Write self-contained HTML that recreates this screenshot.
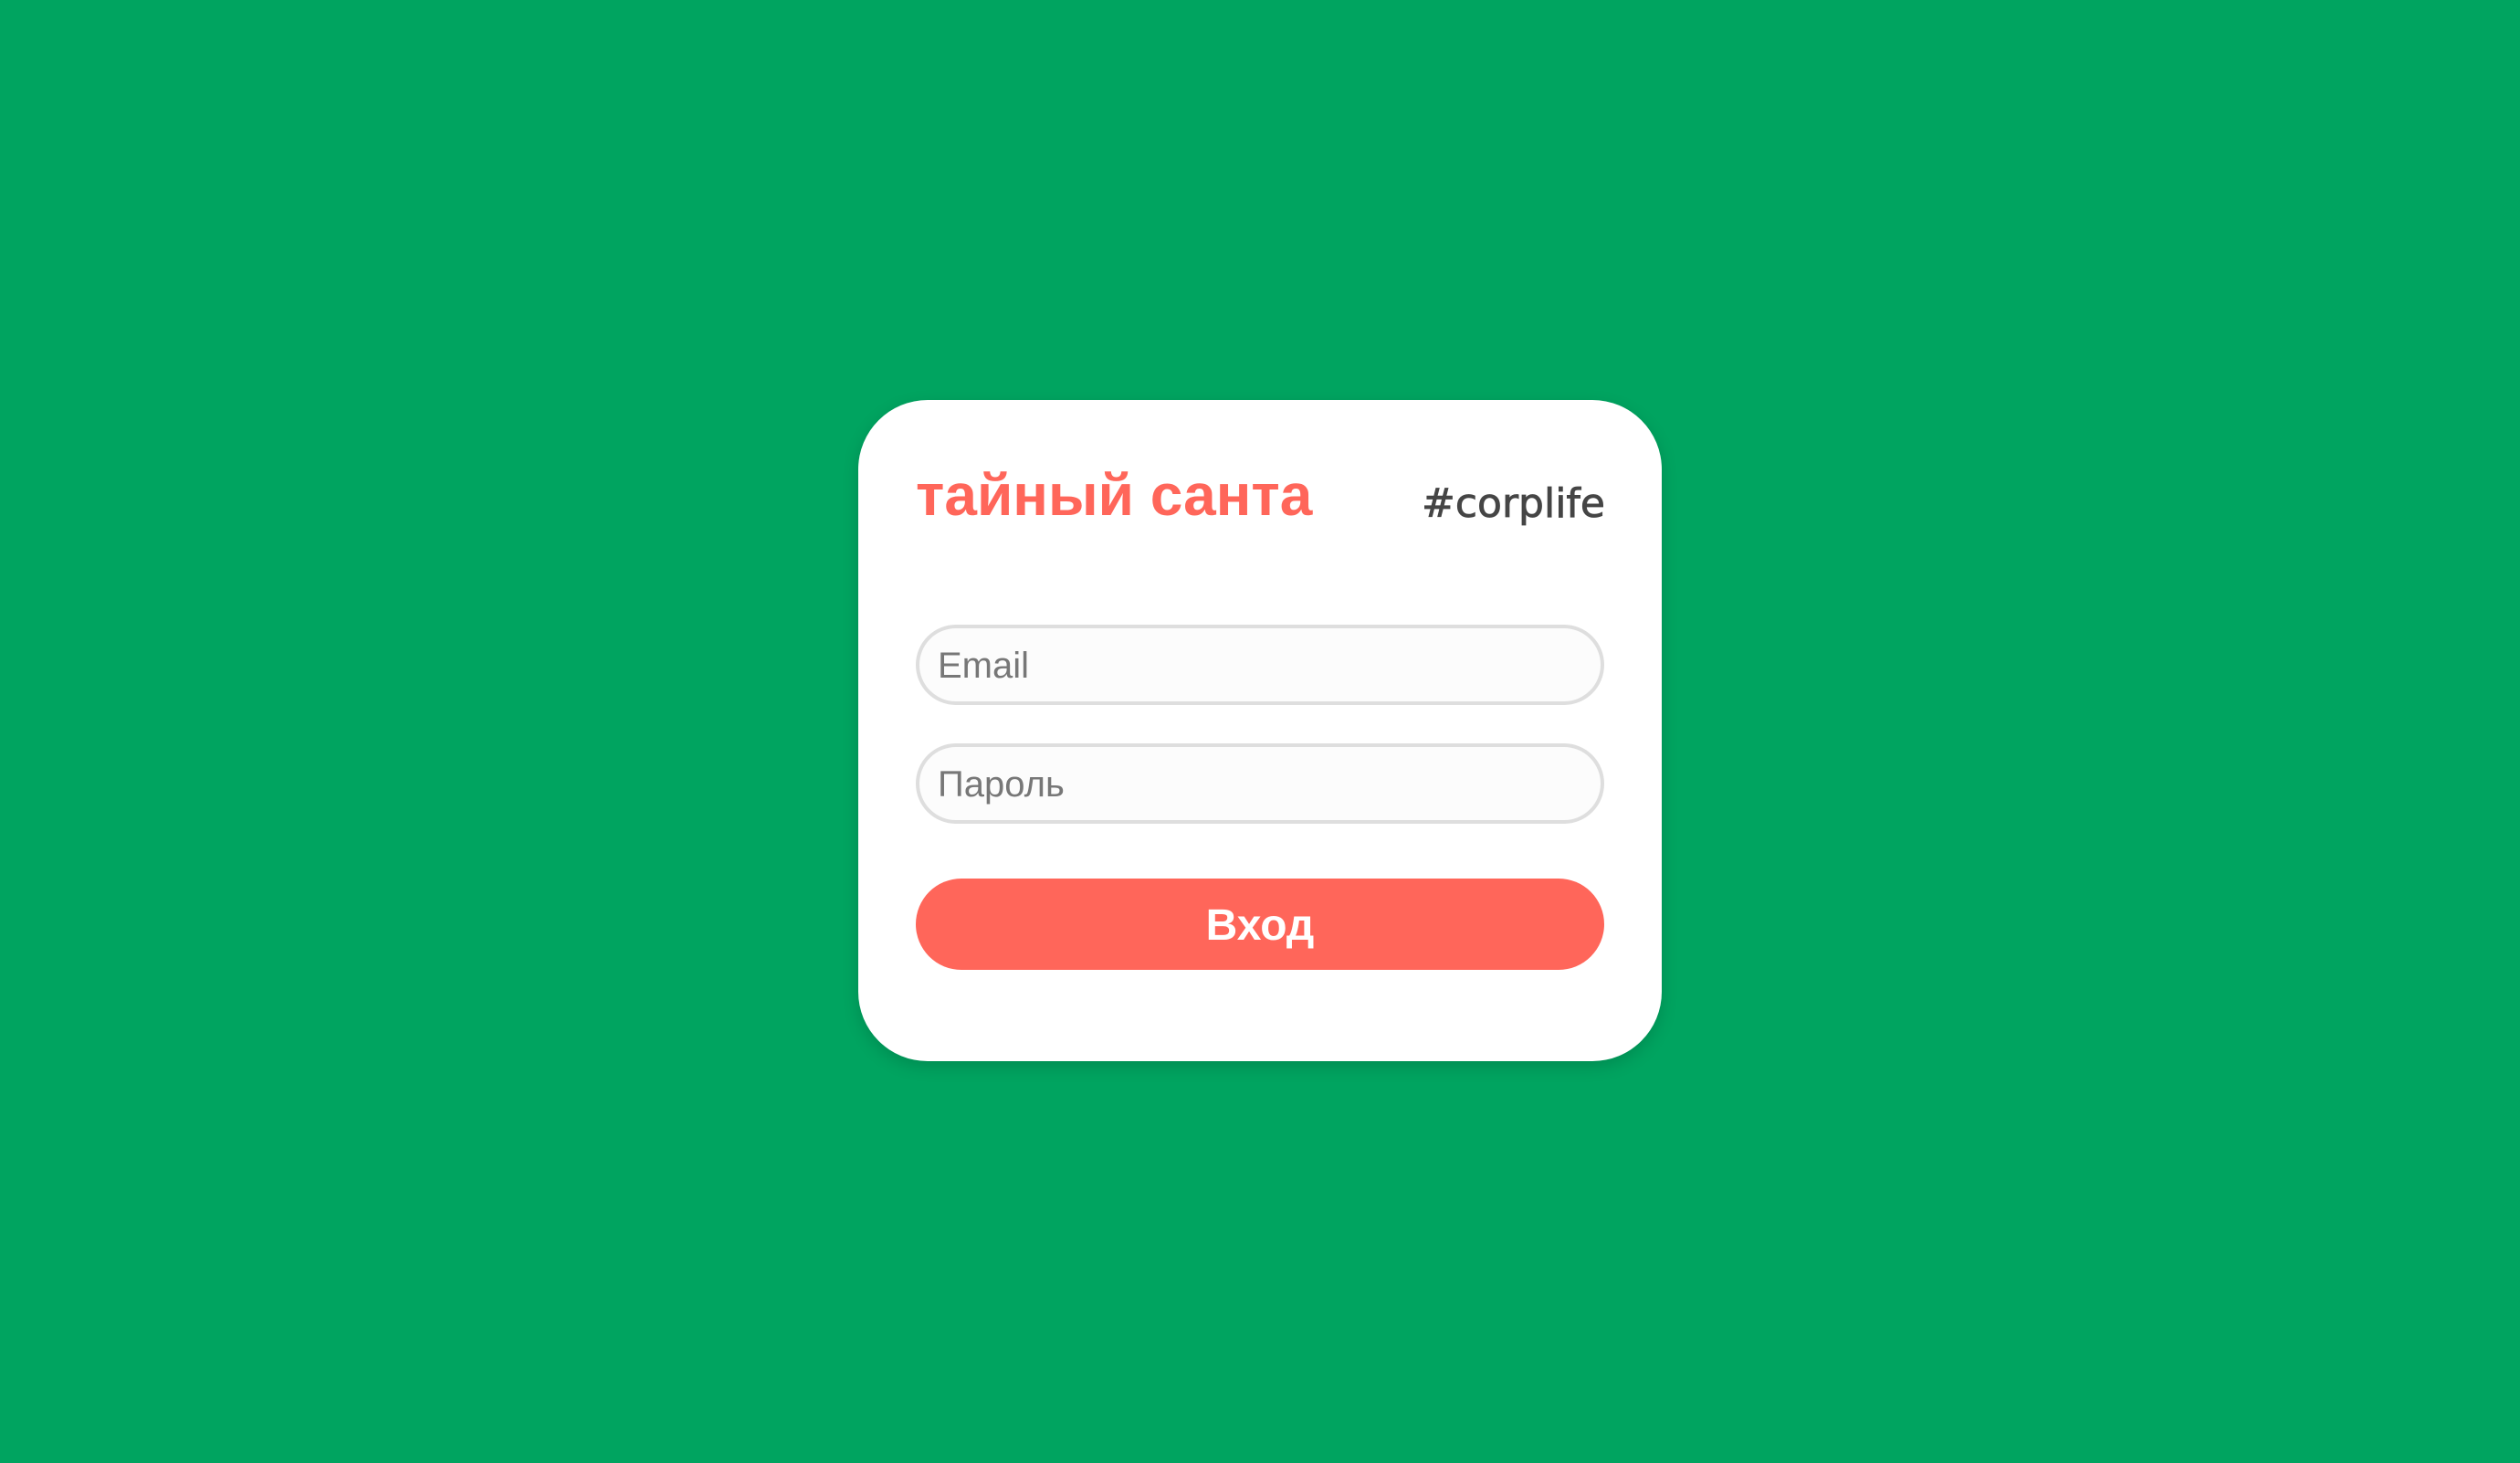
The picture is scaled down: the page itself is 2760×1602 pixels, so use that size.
<!DOCTYPE html>
<html><head><meta charset="utf-8"><style>
html,body{margin:0;padding:0}
body{width:2760px;height:1602px;background:#00a460;position:relative;overflow:hidden;font-family:"Liberation Sans","DejaVu Sans",sans-serif}
.card{position:absolute;left:940px;top:438px;width:880px;height:724px;background:#fff;border-radius:76px;box-shadow:0 6px 18px rgba(0,0,0,0.15)}
.title{position:absolute;left:63px;top:72px;font-size:64px;font-weight:bold;color:#ff665a;line-height:1;white-space:nowrap}
.tag{position:absolute;right:62px;top:92px;font-size:44px;color:#454545;line-height:1;font-family:"DejaVu Sans","Liberation Sans",sans-serif;-webkit-text-stroke:0.8px #454545}
.inp{position:absolute;left:63px;width:746px;height:80px;border:4px solid #dedede;border-radius:46px;background:#fcfcfc;box-sizing:content-box}
.inp span{position:absolute;left:20px;top:19px;font-size:40px;color:#777;line-height:44px}
.btn{position:absolute;left:63px;top:524px;width:754px;height:100px;border-radius:50px;background:#ff665a;color:#fff;font-weight:bold;font-size:48px;text-align:center;line-height:104px}
</style></head><body>
<div class="card">
<div class="title">тайный санта</div>
<div class="tag">#corplife</div>
<div class="inp" style="top:246px"><span>Email</span></div>
<div class="inp" style="top:376px"><span>Пароль</span></div>
<div class="btn">Вход</div>
</div>
</body></html>
